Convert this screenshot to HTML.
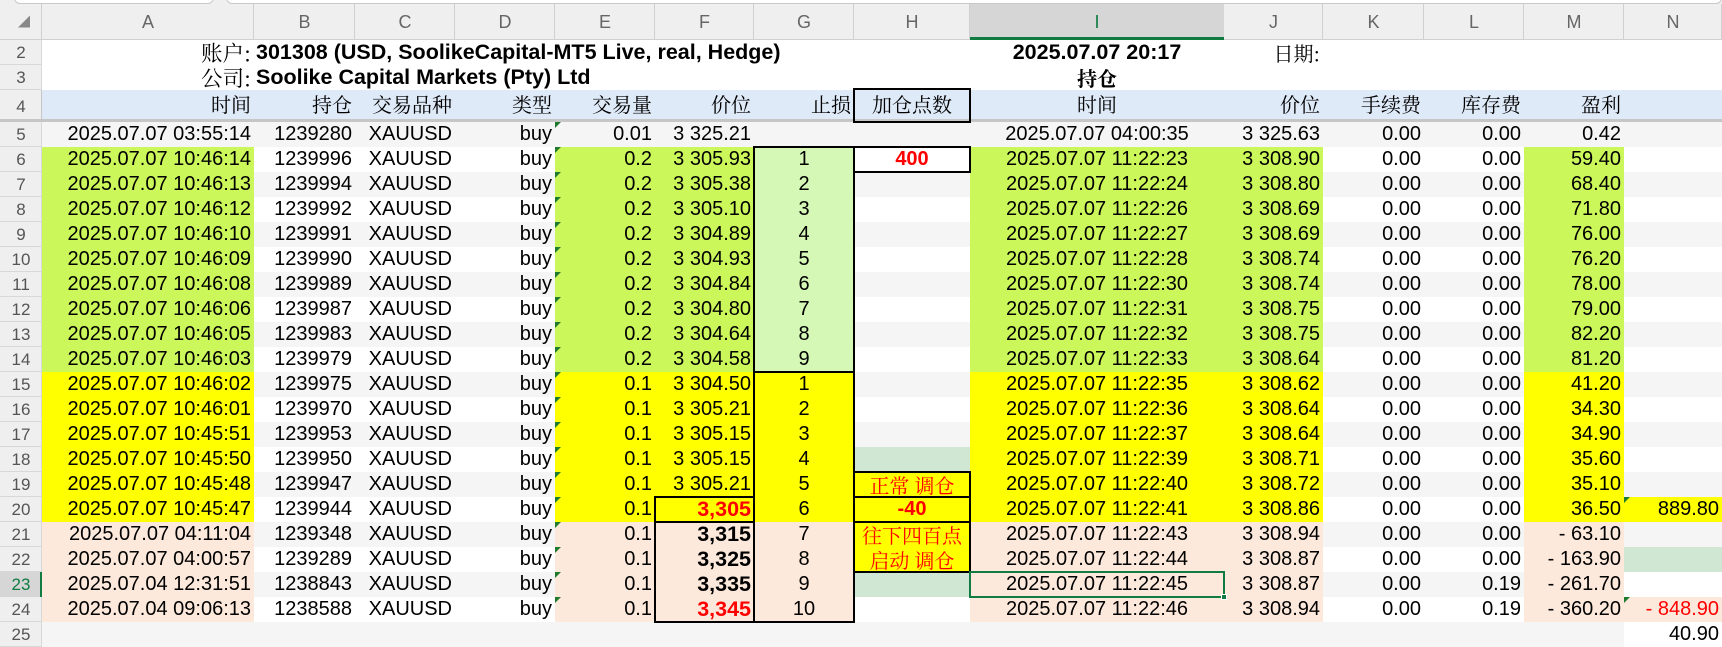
<!DOCTYPE html>
<html><head><meta charset="utf-8">
<style>
*{margin:0;padding:0;box-sizing:border-box}
body{width:1722px;height:644px;overflow:hidden;background:#fff;position:relative;font-family:"Liberation Sans","Noto Sans CJK SC",sans-serif}
#top{position:absolute;left:0;top:0;width:1722px;height:4px;background:#efefef}
#top div{position:absolute;top:-6px;height:10px;background:#fff;border:1px solid #c8c8c8;border-radius:0 0 6px 6px}
table{position:absolute;left:0;top:4px;border-collapse:collapse;table-layout:fixed;width:1722px}
td,th{white-space:nowrap;overflow:hidden;padding:0 3px;font-size:20px;line-height:25px;height:25px;text-align:right;font-weight:normal;color:#000;border:0}
th{background:#efefef;color:#555;font-size:17px;text-align:center;box-shadow:inset -1px -1px 0 #d8d8d8}
tr.ch td{background:#efefef;color:#666;font-size:18px;text-align:center;height:36px;line-height:36px;box-shadow:inset -1px -1px 0 #d0d0d0}
tr.ch td.sel{background:#d6d6d6;color:#107c41;box-shadow:inset 0 -3px 0 #107c41}
tr.o td{background:#f5f5f5}
tr.h td{background:#dfeaf8;height:32px;line-height:30px;font-family:"Liberation Serif","Noto Serif CJK SC",serif;box-shadow:inset 0 -3px 0 #c6c6c6}
tr.h th{height:32px;box-shadow:inset -1px -3px 0 #c6c6c6}
.c{text-align:center}
.b{font-weight:bold}
.r{color:#f00}
tr td.g{background:#ccf75b}
tr td.lg{background:#d5f8b7}
tr td.y{background:#ffff00}
tr td.p{background:#fde9dc}
tr td.pg{background:#cfe7d3}
tr td.w{background:#fff}
td.e{position:relative}
td.e::before{content:"";position:absolute;left:0;top:0;border-top:6px solid #1f7a2e;border-right:6px solid transparent}
.cj{font-family:"Noto Serif CJK SC","Liberation Serif",serif}
.t2{font-size:21.5px}
.bx{position:absolute;border:2px solid #000}
</style></head><body>
<div id="top"><div style="left:14px;width:200px"></div><div style="left:226px;width:1496px"></div></div>
<table>
<colgroup><col style="width:42px"><col style="width:212px"><col style="width:101px"><col style="width:100px"><col style="width:100px"><col style="width:100px"><col style="width:99px"><col style="width:100px"><col style="width:116px"><col style="width:254px"><col style="width:99px"><col style="width:101px"><col style="width:100px"><col style="width:100px"><col style="width:98px"></colgroup>
<tr class="ch"><td style="color:#888;font-size:12px;text-align:left;padding-left:18px">◢</td><td>A</td><td>B</td><td>C</td><td>D</td><td>E</td><td>F</td><td>G</td><td>H</td><td class="sel">I</td><td>J</td><td>K</td><td>L</td><td>M</td><td>N</td></tr>
<tr><th>2</th><td class="cj t2">账户:</td><td colspan="7" class="b t2" style="text-align:left;padding-left:2px">301308 (USD, SoolikeCapital-MT5 Live, real, Hedge)</td><td class="b c t2">2025.07.07 20:17</td><td class="cj">日期:</td><td></td><td></td><td></td><td></td></tr>
<tr><th>3</th><td class="cj t2">公司:</td><td colspan="7" class="b t2" style="text-align:left;padding-left:2px">Soolike Capital Markets (Pty) Ltd</td><td class="b c cj">持仓</td><td></td><td></td><td></td><td></td><td></td></tr>
<tr class="h"><th>4</th><td>时间</td><td>持仓</td><td>交易品种</td><td>类型</td><td>交易量</td><td>价位</td><td>止损</td><td class="c">加仓点数</td><td class="c">时间</td><td>价位</td><td>手续费</td><td>库存费</td><td>盈利</td><td></td></tr>
<tr class="o"><th>5</th><td>2025.07.07 03:55:14</td><td>1239280</td><td>XAUUSD</td><td>buy</td><td class="e">0.01</td><td>3 325.21</td><td></td><td></td><td class="c">2025.07.07 04:00:35</td><td>3 325.63</td><td>0.00</td><td>0.00</td><td>0.42</td><td></td></tr>
<tr><th>6</th><td class="g">2025.07.07 10:46:14</td><td>1239996</td><td>XAUUSD</td><td>buy</td><td class="e g">0.2</td><td class="g">3 305.93</td><td class="lg c">1</td><td class="c b r w">400</td><td class="g c">2025.07.07 11:22:23</td><td class="g">3 308.90</td><td>0.00</td><td>0.00</td><td class="g">59.40</td><td></td></tr>
<tr class="o"><th>7</th><td class="g">2025.07.07 10:46:13</td><td>1239994</td><td>XAUUSD</td><td>buy</td><td class="e g">0.2</td><td class="g">3 305.38</td><td class="lg c">2</td><td></td><td class="g c">2025.07.07 11:22:24</td><td class="g">3 308.80</td><td>0.00</td><td>0.00</td><td class="g">68.40</td><td></td></tr>
<tr><th>8</th><td class="g">2025.07.07 10:46:12</td><td>1239992</td><td>XAUUSD</td><td>buy</td><td class="e g">0.2</td><td class="g">3 305.10</td><td class="lg c">3</td><td></td><td class="g c">2025.07.07 11:22:26</td><td class="g">3 308.69</td><td>0.00</td><td>0.00</td><td class="g">71.80</td><td></td></tr>
<tr class="o"><th>9</th><td class="g">2025.07.07 10:46:10</td><td>1239991</td><td>XAUUSD</td><td>buy</td><td class="e g">0.2</td><td class="g">3 304.89</td><td class="lg c">4</td><td></td><td class="g c">2025.07.07 11:22:27</td><td class="g">3 308.69</td><td>0.00</td><td>0.00</td><td class="g">76.00</td><td></td></tr>
<tr><th>10</th><td class="g">2025.07.07 10:46:09</td><td>1239990</td><td>XAUUSD</td><td>buy</td><td class="e g">0.2</td><td class="g">3 304.93</td><td class="lg c">5</td><td></td><td class="g c">2025.07.07 11:22:28</td><td class="g">3 308.74</td><td>0.00</td><td>0.00</td><td class="g">76.20</td><td></td></tr>
<tr class="o"><th>11</th><td class="g">2025.07.07 10:46:08</td><td>1239989</td><td>XAUUSD</td><td>buy</td><td class="e g">0.2</td><td class="g">3 304.84</td><td class="lg c">6</td><td></td><td class="g c">2025.07.07 11:22:30</td><td class="g">3 308.74</td><td>0.00</td><td>0.00</td><td class="g">78.00</td><td></td></tr>
<tr><th>12</th><td class="g">2025.07.07 10:46:06</td><td>1239987</td><td>XAUUSD</td><td>buy</td><td class="e g">0.2</td><td class="g">3 304.80</td><td class="lg c">7</td><td></td><td class="g c">2025.07.07 11:22:31</td><td class="g">3 308.75</td><td>0.00</td><td>0.00</td><td class="g">79.00</td><td></td></tr>
<tr class="o"><th>13</th><td class="g">2025.07.07 10:46:05</td><td>1239983</td><td>XAUUSD</td><td>buy</td><td class="e g">0.2</td><td class="g">3 304.64</td><td class="lg c">8</td><td></td><td class="g c">2025.07.07 11:22:32</td><td class="g">3 308.75</td><td>0.00</td><td>0.00</td><td class="g">82.20</td><td></td></tr>
<tr><th>14</th><td class="g">2025.07.07 10:46:03</td><td>1239979</td><td>XAUUSD</td><td>buy</td><td class="e g">0.2</td><td class="g">3 304.58</td><td class="lg c">9</td><td></td><td class="g c">2025.07.07 11:22:33</td><td class="g">3 308.64</td><td>0.00</td><td>0.00</td><td class="g">81.20</td><td></td></tr>
<tr class="o"><th>15</th><td class="y">2025.07.07 10:46:02</td><td>1239975</td><td>XAUUSD</td><td>buy</td><td class="e y">0.1</td><td class="y">3 304.50</td><td class="y c">1</td><td></td><td class="y c">2025.07.07 11:22:35</td><td class="y">3 308.62</td><td>0.00</td><td>0.00</td><td class="y">41.20</td><td></td></tr>
<tr><th>16</th><td class="y">2025.07.07 10:46:01</td><td>1239970</td><td>XAUUSD</td><td>buy</td><td class="e y">0.1</td><td class="y">3 305.21</td><td class="y c">2</td><td></td><td class="y c">2025.07.07 11:22:36</td><td class="y">3 308.64</td><td>0.00</td><td>0.00</td><td class="y">34.30</td><td></td></tr>
<tr class="o"><th>17</th><td class="y">2025.07.07 10:45:51</td><td>1239953</td><td>XAUUSD</td><td>buy</td><td class="e y">0.1</td><td class="y">3 305.15</td><td class="y c">3</td><td></td><td class="y c">2025.07.07 11:22:37</td><td class="y">3 308.64</td><td>0.00</td><td>0.00</td><td class="y">34.90</td><td></td></tr>
<tr><th>18</th><td class="y">2025.07.07 10:45:50</td><td>1239950</td><td>XAUUSD</td><td>buy</td><td class="e y">0.1</td><td class="y">3 305.15</td><td class="y c">4</td><td class="pg"></td><td class="y c">2025.07.07 11:22:39</td><td class="y">3 308.71</td><td>0.00</td><td>0.00</td><td class="y">35.60</td><td></td></tr>
<tr class="o"><th>19</th><td class="y">2025.07.07 10:45:48</td><td>1239947</td><td>XAUUSD</td><td>buy</td><td class="e y">0.1</td><td class="y">3 305.21</td><td class="y c">5</td><td class="y c r cj">正常 调仓</td><td class="y c">2025.07.07 11:22:40</td><td class="y">3 308.72</td><td>0.00</td><td>0.00</td><td class="y">35.10</td><td></td></tr>
<tr><th>20</th><td class="y">2025.07.07 10:45:47</td><td>1239944</td><td>XAUUSD</td><td>buy</td><td class="e y">0.1</td><td class="y b r t2">3,305</td><td class="y c">6</td><td class="y c b r">-40</td><td class="y c">2025.07.07 11:22:41</td><td class="y">3 308.86</td><td>0.00</td><td>0.00</td><td class="y">36.50</td><td class="y e">889.80</td></tr>
<tr class="o"><th>21</th><td class="p">2025.07.07 04:11:04</td><td>1239348</td><td>XAUUSD</td><td>buy</td><td class="e p">0.1</td><td class="p b t2">3,315</td><td class="p c">7</td><td class="y c r cj" rowspan="2" style="line-height:25px;white-space:normal;font-size:20px">往下四百点<br>启动 调仓</td><td class="p c">2025.07.07 11:22:43</td><td class="p">3 308.94</td><td>0.00</td><td>0.00</td><td class="p">- 63.10</td><td></td></tr>
<tr><th>22</th><td class="p">2025.07.07 04:00:57</td><td>1239289</td><td>XAUUSD</td><td>buy</td><td class="e p">0.1</td><td class="p b t2">3,325</td><td class="p c">8</td><td class="p c">2025.07.07 11:22:44</td><td class="p">3 308.87</td><td>0.00</td><td>0.00</td><td class="p">- 163.90</td><td class="pg"></td></tr>
<tr class="o"><th style="background:#d6d6d6;color:#107c41;box-shadow:inset -2px 0 0 #107c41">23</th><td class="p">2025.07.04 12:31:51</td><td>1238843</td><td>XAUUSD</td><td>buy</td><td class="e p">0.1</td><td class="p b t2">3,335</td><td class="p c">9</td><td class="pg"></td><td class="p c">2025.07.07 11:22:45</td><td class="p">3 308.87</td><td>0.00</td><td>0.19</td><td class="p">- 261.70</td><td class="w"></td></tr>
<tr><th>24</th><td class="p">2025.07.04 09:06:13</td><td>1238588</td><td>XAUUSD</td><td>buy</td><td class="e p">0.1</td><td class="p b r t2">3,345</td><td class="p c">10</td><td></td><td class="p c">2025.07.07 11:22:46</td><td class="p">3 308.94</td><td>0.00</td><td>0.19</td><td class="p">- 360.20</td><td class="p e r">- 848.90</td></tr>
<tr class="o"><th>25</th><td></td><td></td><td></td><td></td><td></td><td></td><td></td><td></td><td></td><td></td><td></td><td></td><td></td><td class="w">40.90</td></tr>
</table>
<div class="bx" style="left:853px;top:88px;width:118px;height:35px"></div>
<div class="bx" style="left:753px;top:146px;width:102px;height:227px"></div>
<div class="bx" style="left:753px;top:371px;width:102px;height:252px"></div>
<div class="bx" style="left:853px;top:146px;width:118px;height:27px"></div>
<div class="bx" style="left:853px;top:471px;width:118px;height:27px"></div>
<div class="bx" style="left:853px;top:496px;width:118px;height:27px"></div>
<div class="bx" style="left:853px;top:521px;width:118px;height:52px"></div>
<div class="bx" style="left:654px;top:496px;width:101px;height:27px"></div>
<div class="bx" style="left:654px;top:521px;width:101px;height:102px"></div>
<div style="position:absolute;left:969px;top:571px;width:256px;height:27px;border:2px solid #107c41"></div>
<div style="position:absolute;left:1221px;top:594px;width:6px;height:6px;background:#107c41;border:1px solid #fff"></div>
</body></html>
